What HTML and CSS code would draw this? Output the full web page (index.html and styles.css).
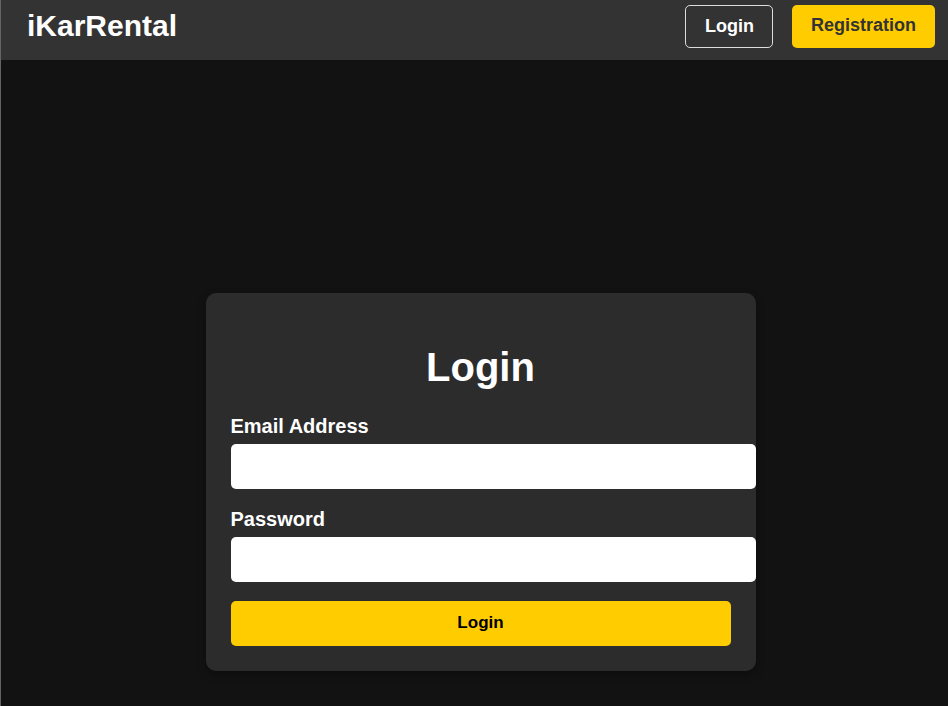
FILE: index.html
```html
<!DOCTYPE html>
<html lang="en">
<head>
<meta charset="utf-8">
<title>iKarRental - Login</title>
<link rel="stylesheet" href="styles.css">
</head>
<body>
<div class="page">
  <header class="topbar">
    <a class="logo" href="#">iKarRental</a>
    <nav class="nav">
      <a class="nav-btn nav-login" href="#">Login</a>
      <a class="nav-btn nav-register" href="#">Registration</a>
    </nav>
  </header>
  <main class="main">
    <form class="card">
      <h1 class="card-title">Login</h1>
      <label class="field-label" for="email">Email Address</label>
      <input class="field-input" id="email" type="email">
      <label class="field-label field-label-gap" for="password">Password</label>
      <input class="field-input" id="password" type="password">
      <button class="submit-btn" type="button">Login</button>
    </form>
  </main>
</div>
</body>
</html>
```
FILE: styles.css
```css
* { box-sizing: border-box; }
html, body {
  margin: 0;
  padding: 0;
  background: #121212;
  font-family: "Liberation Sans", Arial, sans-serif;
}
.page {
  min-height: 706px;
  border-left: 1px solid rgba(255, 255, 255, 0.35);
  background: #121212;
}
.topbar {
  height: 60px;
  background: #333333;
  display: flex;
  justify-content: space-between;
  align-items: flex-start;
  padding: 0 13px 0 26px;
}
.logo {
  margin-top: 8px;
  font-size: 30px;
  line-height: 36px;
  font-weight: bold;
  color: #ffffff;
  text-decoration: none;
}
.nav {
  display: flex;
  gap: 19px;
  margin-top: 5px;
}
.nav-btn {
  display: block;
  font-size: 18px;
  line-height: 21px;
  font-weight: bold;
  text-decoration: none;
  border-radius: 5px;
}
.nav-login {
  color: #ffffff;
  border: 1px solid #dddddd;
  padding: 10px 18px 10px 19px;
}
.nav-register {
  color: #333333;
  background: #ffcc00;
  padding: 10px 19px 12px;
}
.main {
  display: flex;
  justify-content: center;
  padding: 233px 0 35px 12px;
}
.card {
  width: 550px;
  background: #2c2c2c;
  border-radius: 10px;
  padding: 25px;
  display: flex;
  flex-direction: column;
  align-items: flex-start;
  box-shadow: 0 4px 10px rgba(0, 0, 0, 0.3);
}
.card-title {
  align-self: stretch;
  text-align: center;
  color: #ffffff;
  font-size: 40px;
  line-height: 46px;
  font-weight: bold;
  margin: 26px 0 25px;
}
.field-label {
  display: block;
  color: #ffffff;
  font-size: 20px;
  line-height: 23px;
  font-weight: bold;
  margin-bottom: 6px;
}
.field-label-gap {
  margin-top: 19px;
}
.field-input {
  width: 525px;
  height: 45px;
  border: none;
  border-radius: 5px;
  background: #ffffff;
  padding: 0 12px;
  font-size: 16px;
  font-family: "Liberation Sans", Arial, sans-serif;
  outline: none;
}
.submit-btn {
  width: 500px;
  height: 45px;
  margin-top: 19px;
  padding: 0 0 2px;
  border: none;
  border-radius: 5px;
  background: #ffcc00;
  color: #000000;
  font-family: "Liberation Sans", Arial, sans-serif;
  font-size: 17px;
  font-weight: bold;
  cursor: pointer;
}
```
